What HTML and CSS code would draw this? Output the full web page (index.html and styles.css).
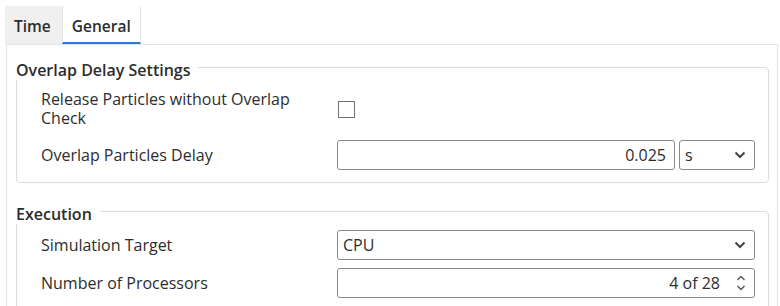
FILE: index.html
```html
<!DOCTYPE html>
<html lang="en">
<head>
    <meta charset="UTF-8">
    <title>Settings</title>
    <link rel="stylesheet" href="styles.css">
</head>
<body>
    <div class="tabs">
        <div class="tab">Time</div>
        <div class="tab active">General</div>
    </div>
    <div class="panel">
        <div class="group">
            <div class="group-title">Overlap Delay Settings</div>
            <div class="row tall">
                <div class="label">Release Particles without Overlap Check</div>
                <div class="control"><span class="check"></span></div>
            </div>
            <div class="row">
                <div class="label">Overlap Particles Delay</div>
                <div class="control">
                    <div class="field num">0.025</div>
                    <div class="field unit">
                        <span>s</span>
                        <svg width="12" height="8" viewBox="0 0 12 8"><polyline points="1.5,1.5 6,6 10.5,1.5" fill="none" stroke="#444" stroke-width="2"/></svg>
                    </div>
                </div>
            </div>
        </div>
        <div class="group">
            <div class="group-title">Execution</div>
            <div class="row">
                <div class="label">Simulation Target</div>
                <div class="control">
                    <div class="field select">
                        <span>CPU</span>
                        <svg width="12" height="8" viewBox="0 0 12 8"><polyline points="1.5,1.5 6,6 10.5,1.5" fill="none" stroke="#444" stroke-width="2"/></svg>
                    </div>
                </div>
            </div>
            <div class="row">
                <div class="label">Number of Processors</div>
                <div class="control">
                    <div class="field num spin">
                        <span>4 of 28</span>
                        <svg width="10" height="18" viewBox="0 0 10 18"><polyline points="1.5,6 5,2.5 8.5,6" fill="none" stroke="#555" stroke-width="1.4"/><polyline points="1.5,12 5,15.5 8.5,12" fill="none" stroke="#555" stroke-width="1.4"/></svg>
                    </div>
                </div>
            </div>
        </div>
    </div>
</body>
</html>
```

FILE: styles.css
```css
* {
    margin: 0;
    padding: 0;
    box-sizing: border-box;
}
body {
    background: #fff;
    color: #2d2d2d;
    font-family: "Open Sans", "Noto Sans", sans-serif;
    font-size: 16px;
    overflow: hidden;
}
.tabs {
    display: flex;
    margin: 6px 0 0 5px;
    height: 38px;
    font-size: 15.5px;
    line-height: 20px;
}
.tab {
    background: #f0f0f0;
    font-weight: 600;
    padding: 10px 11px 0 9px;
}
.tab.active {
    background: #fff;
    border-left: 1px solid #e6e6e6;
    border-right: 1px solid #e6e6e6;
    border-bottom: 2px solid #2a7ad5;
    padding: 10px 9px 0 9px;
}
.panel {
    margin: 0 2px 0 6px;
    border: 1px solid #e1e5ea;
    border-bottom: 0;
    height: 300px;
    padding: 22px 8px 0 9px;
}
.group {
    border: 1px solid #dcdcdc;
    border-radius: 4px;
    padding: 0 13px 12px 24px;
    margin-bottom: 28px;
}
.group-title {
    width: fit-content;
    background: #fff;
    font-weight: 600;
    line-height: 20px;
    padding-right: 8px;
    margin: -8px 0 -2px -25px;
}
.row {
    display: flex;
    align-items: center;
    min-height: 30px;
    margin-top: 8px;
}
.row.tall {
    min-height: 46px;
}
.label {
    width: 296px;
    padding-right: 20px;
    line-height: 19px;
}
.control {
    flex: 1;
    display: flex;
    gap: 4px;
}
.check {
    display: block;
    width: 17px;
    height: 17px;
    border: 1px solid #707070;
    margin-left: 1px;
}
.field {
    height: 30px;
    border: 1px solid #8a8a8a;
    border-radius: 3px;
    display: flex;
    align-items: center;
    padding: 0 8px 0 5px;
}
.num {
    flex: 1;
    justify-content: flex-end;
}
.unit {
    width: 76px;
    justify-content: space-between;
}
.select {
    flex: 1;
    justify-content: space-between;
}
.spin {
    gap: 16px;
}
```
